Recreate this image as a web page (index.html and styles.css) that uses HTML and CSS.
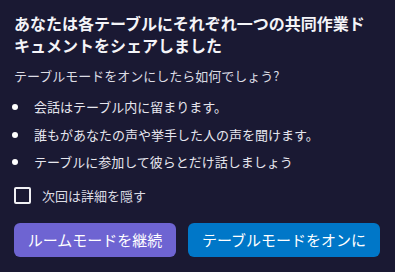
FILE: index.html
```html
<!DOCTYPE html>
<html>
    <head>
        <title>テーブルモード</title>
        <meta http-equiv="Content-Type" content="text/html; charset=UTF-8">
        <link rel="stylesheet" href="styles.css">
    </head>
    <body>
        <div class="dialog">
            <h2 class="dialog-title">あなたは各テーブルにそれぞれ一つの共同作業ドキュメントをシェアしました</h2>
            <p class="dialog-question">テーブルモードをオンにしたら如何でしょう?</p>
            <ul class="dialog-list">
                <li>会話はテーブル内に留まります。</li>
                <li>誰もがあなたの声や挙手した人の声を聞けます。</li>
                <li>テーブルに参加して彼らとだけ話しましょう</li>
            </ul>
            <label class="hide-next">
                <span class="checkbox"></span>
                次回は詳細を隠す
            </label>
            <div class="dialog-buttons">
                <button class="button button-room">ルームモードを継続</button>
                <button class="button button-table">テーブルモードをオンに</button>
            </div>
        </div>
    </body>
</html>
```

FILE: styles.css
```css
body {
    padding: 0;
    margin: 0;
    background-color: #1a1933;
    font-family: "Noto Sans CJK JP", "Noto Sans", sans-serif;
    color: #fff;
}

.dialog {
    padding: 12px 14px 12px 14px;
}

.dialog-title {
    margin: 0;
    padding-right: 12px;
    font-size: 16px;
    line-height: 22px;
    font-weight: 700;
    color: #f4f4f8;
}

.dialog-question {
    margin: 10px 0 0 0;
    font-size: 13px;
    line-height: 20px;
    color: #dcdce4;
}

.dialog-list {
    list-style: none;
    margin: 7px 0 0 0;
    padding: 0;
}

.dialog-list li {
    position: relative;
    padding-left: 20px;
    font-size: 13px;
    line-height: 27.5px;
    color: #e6e6ee;
}

/* bullet dot */
.dialog-list li::before {
    content: "";
    position: absolute;
    left: -2px;
    top: 11px;
    width: 6px;
    height: 6px;
    border-radius: 50%;
    background-color: #fff;
}

.hide-next {
    display: flex;
    align-items: center;
    gap: 11px;
    margin-top: 11px;
    font-size: 13px;
    line-height: 18px;
    color: #dcdce4;
}

.checkbox {
    display: block;
    width: 13px;
    height: 13px;
    border: 2px solid #f0f0f4;
    border-radius: 2px;
}

.dialog-buttons {
    display: flex;
    gap: 12px;
    margin-top: 18px;
}

.button {
    height: 34px;
    border: none;
    border-radius: 6px;
    font-family: inherit;
    font-size: 15px;
    color: #fff;
    padding: 0;
}

.button-room {
    width: 162px;
    background-color: #6e64d2;
}

.button-table {
    width: 192px;
    background-color: #0077c8;
}
```
